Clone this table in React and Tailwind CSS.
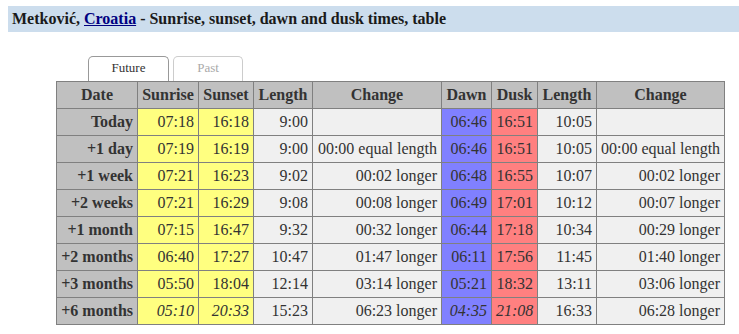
const rows = [
  ["Today", "07:18", "16:18", "9:00", "", "06:46", "16:51", "10:05", ""],
  ["+1 day", "07:19", "16:19", "9:00", "00:00 equal length", "06:46", "16:51", "10:05", "00:00 equal length"],
  ["+1 week", "07:21", "16:23", "9:02", "00:02 longer", "06:48", "16:55", "10:07", "00:02 longer"],
  ["+2 weeks", "07:21", "16:29", "9:08", "00:08 longer", "06:49", "17:01", "10:12", "00:07 longer"],
  ["+1 month", "07:15", "16:47", "9:32", "00:32 longer", "06:44", "17:18", "10:34", "00:29 longer"],
  ["+2 months", "06:40", "17:27", "10:47", "01:47 longer", "06:11", "17:56", "11:45", "01:40 longer"],
  ["+3 months", "05:50", "18:04", "12:14", "03:14 longer", "05:21", "18:32", "13:11", "03:06 longer"],
  ["+6 months", "05:10", "20:33", "15:23", "06:23 longer", "04:35", "21:08", "16:33", "06:28 longer", true],
];

const widths = [81, 61, 55, 59, 129, 50, 46, 59, 128];
const bgs = ["bg-[#c0c0c0]", "bg-[#ffff80]", "bg-[#ffff80]", "bg-[#f0f0f0]", "bg-[#f0f0f0]", "bg-[#8080ff]", "bg-[#ff8080]", "bg-[#f0f0f0]", "bg-[#f0f0f0]"];
const heads = ["Date", "Sunrise", "Sunset", "Length", "Change", "Dawn", "Dusk", "Length", "Change"];

export default function App() {
  return (
    <div className="w-[739px] h-[334px] bg-white overflow-hidden pt-[6px] pl-2 text-[#333] font-['Liberation_Serif','Times_New_Roman',serif]">
      <div className="h-[26px] bg-[#ccdded] pl-1 text-[16px] font-bold leading-[26px] text-[#1a1a1a]">
        Metković, <a href="#" className="text-[#000080] underline">Croatia</a> - Sunrise, sunset, dawn and dusk times, table
      </div>

      <div className="ml-12 mt-6">
        <div className="flex gap-1 pl-8">
          <div className="w-[81px] h-[25px] border border-b-0 border-[#999] rounded-t-[5px] bg-white text-center text-[13px] leading-[22px] text-[#333]">
            Future
          </div>
          <div className="w-[70px] h-[25px] border border-b-0 border-[#ccc] rounded-t-[5px] bg-white text-center text-[13px] leading-[22px] text-[#aaa]">
            Past
          </div>
        </div>

        <table className="table-fixed border-collapse w-[668px] text-[16px]">
          <colgroup>
            {widths.map((w, i) => (
              <col key={i} style={{ width: w }} />
            ))}
          </colgroup>
          <thead>
            <tr>
              {heads.map((h, i) => (
                <th key={i} className="border border-[#808080] bg-[#c0c0c0] font-bold text-center py-[3px] px-1 leading-[20px]">
                  {h}
                </th>
              ))}
            </tr>
          </thead>
          <tbody>
            {rows.map((r, ri) => (
              <tr key={ri}>
                {r.slice(0, 9).map((c, ci) => {
                  const italic = r[9] && [1, 2, 5, 6].includes(ci);
                  return (
                    <td
                      key={ci}
                      className={`border border-[#808080] ${bgs[ci]} text-right py-[3px] px-1 leading-[20px] whitespace-nowrap ${ci === 0 ? "font-bold" : ""} ${italic ? "italic" : ""}`}
                    >
                      {c}
                    </td>
                  );
                })}
              </tr>
            ))}
          </tbody>
        </table>
      </div>
    </div>
  );
}
